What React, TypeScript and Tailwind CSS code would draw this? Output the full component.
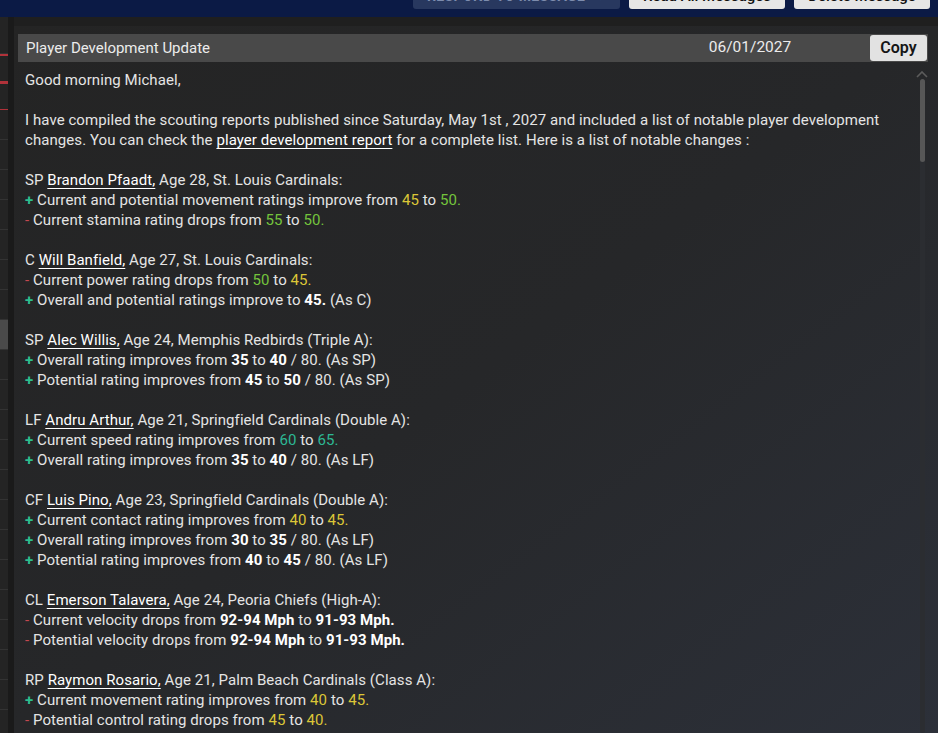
import React from 'react';

type Seg = { t: string; c?: 'y' | 'g' | 't' | 'b' };

interface Change {
  sign: '+' | '-';
  parts: Seg[];
}

interface Player {
  pos: string;
  name: string;
  rest: string;
  changes: Change[];
}

const players: Player[] = [
  {
    pos: 'SP', name: 'Brandon Pfaadt,', rest: ' Age 28, St. Louis Cardinals:',
    changes: [
      { sign: '+', parts: [{ t: 'Current and potential movement ratings improve from ' }, { t: '45', c: 'y' }, { t: ' to ' }, { t: '50.', c: 'g' }] },
      { sign: '-', parts: [{ t: 'Current stamina rating drops from ' }, { t: '55', c: 'g' }, { t: ' to ' }, { t: '50.', c: 'g' }] },
    ],
  },
  {
    pos: 'C', name: 'Will Banfield,', rest: ' Age 27, St. Louis Cardinals:',
    changes: [
      { sign: '-', parts: [{ t: 'Current power rating drops from ' }, { t: '50', c: 'g' }, { t: ' to ' }, { t: '45.', c: 'y' }] },
      { sign: '+', parts: [{ t: 'Overall and potential ratings improve to ' }, { t: '45.', c: 'b' }, { t: ' (As C)' }] },
    ],
  },
  {
    pos: 'SP', name: 'Alec Willis,', rest: ' Age 24, Memphis Redbirds (Triple A):',
    changes: [
      { sign: '+', parts: [{ t: 'Overall rating improves from ' }, { t: '35', c: 'b' }, { t: ' to ' }, { t: '40', c: 'b' }, { t: ' / 80. (As SP)' }] },
      { sign: '+', parts: [{ t: 'Potential rating improves from ' }, { t: '45', c: 'b' }, { t: ' to ' }, { t: '50', c: 'b' }, { t: ' / 80. (As SP)' }] },
    ],
  },
  {
    pos: 'LF', name: 'Andru Arthur,', rest: ' Age 21, Springfield Cardinals (Double A):',
    changes: [
      { sign: '+', parts: [{ t: 'Current speed rating improves from ' }, { t: '60', c: 't' }, { t: ' to ' }, { t: '65.', c: 't' }] },
      { sign: '+', parts: [{ t: 'Overall rating improves from ' }, { t: '35', c: 'b' }, { t: ' to ' }, { t: '40', c: 'b' }, { t: ' / 80. (As LF)' }] },
    ],
  },
  {
    pos: 'CF', name: 'Luis Pino,', rest: ' Age 23, Springfield Cardinals (Double A):',
    changes: [
      { sign: '+', parts: [{ t: 'Current contact rating improves from ' }, { t: '40', c: 'y' }, { t: ' to ' }, { t: '45.', c: 'y' }] },
      { sign: '+', parts: [{ t: 'Overall rating improves from ' }, { t: '30', c: 'b' }, { t: ' to ' }, { t: '35', c: 'b' }, { t: ' / 80. (As LF)' }] },
      { sign: '+', parts: [{ t: 'Potential rating improves from ' }, { t: '40', c: 'b' }, { t: ' to ' }, { t: '45', c: 'b' }, { t: ' / 80. (As LF)' }] },
    ],
  },
  {
    pos: 'CL', name: 'Emerson Talavera,', rest: ' Age 24, Peoria Chiefs (High-A):',
    changes: [
      { sign: '-', parts: [{ t: 'Current velocity drops from ' }, { t: '92-94 Mph', c: 'b' }, { t: ' to ' }, { t: '91-93 Mph.', c: 'b' }] },
      { sign: '-', parts: [{ t: 'Potential velocity drops from ' }, { t: '92-94 Mph', c: 'b' }, { t: ' to ' }, { t: '91-93 Mph.', c: 'b' }] },
    ],
  },
  {
    pos: 'RP', name: 'Raymon Rosario,', rest: ' Age 21, Palm Beach Cardinals (Class A):',
    changes: [
      { sign: '+', parts: [{ t: 'Current movement rating improves from ' }, { t: '40', c: 'y' }, { t: ' to ' }, { t: '45.', c: 'y' }] },
      { sign: '-', parts: [{ t: 'Potential control rating drops from ' }, { t: '45', c: 'y' }, { t: ' to ' }, { t: '40.', c: 'y' }] },
    ],
  },
];

const segClass = (c?: Seg['c']) => {
  if (c === 'y') return 'text-[#dcc637]';
  if (c === 'g') return 'text-[#74c43c]';
  if (c === 't') return 'text-[#2db894]';
  if (c === 'b') return 'font-bold text-white';
  return '';
};

// left list strip, mostly hidden behind the message panel
const sideRows = [
  'h-[28px]', 'h-[28px] border-t-2 border-[#b0323a]', 'h-[28px] border-t-2 border-[#b0323a]', 'h-[30px]', 'h-[30px]',
  'h-[30px]', 'h-[30px]', 'h-[30px]', 'h-[30px]', 'h-[30px]', 'h-[30px]', 'h-[30px]', 'h-[30px]', 'h-[30px]',
  'h-[30px]', 'h-[30px]', 'h-[30px]', 'h-[30px]', 'h-[30px]', 'h-[30px]', 'h-[30px]', 'h-[30px]', 'h-[30px]', 'h-[30px]',
];

const App: React.FC = () => {
  return (
    <div className="w-[938px] h-[733px] overflow-hidden bg-[#1e1e1e] flex flex-col text-[15px] text-[#e4e4e4]" style={{ fontFamily: 'Roboto, "Noto Sans", sans-serif' }}>
      {/* top bar, buttons cut off by the window edge */}
      <div className="h-[17px] shrink-0 bg-[#0b1a45] overflow-hidden flex items-end justify-end gap-[9px] pr-[8px] pb-[8px]">
        <div className="w-[207px] h-[26px] shrink-0 rounded-[3px] bg-[#28385f] text-[#7d8cad] text-[14px] font-bold tracking-wide flex items-center justify-between px-[14px]">
          <span>RESPOND TO MESSAGE</span>
          <span className="text-[10px]">▼</span>
        </div>
        <div className="w-[156px] h-[26px] shrink-0 rounded-[3px] bg-[#e6e6e6] text-[#111] text-[15px] font-medium flex items-center justify-center">Read All Messages</div>
        <div className="w-[136px] h-[26px] shrink-0 rounded-[3px] bg-[#e6e6e6] text-[#111] text-[15px] font-medium flex items-center justify-center">Delete Message</div>
      </div>

      <div className="flex flex-1 min-h-0">
        <div className="w-[8px] shrink-0 bg-[#242424] flex flex-col pt-[9px]">
          {sideRows.map((cls, i) => (
            <div key={i} className={`${cls} shrink-0 border-b border-[#333333] ${i === 10 ? 'bg-[#4a4a4a]' : ''}`} />
          ))}
        </div>
        <div className="w-[6px] shrink-0 bg-[#1a1a1a]" />

        <div className="flex-1 min-w-0 flex flex-col pt-[9px] bg-[#1f1f1f]">
          <div className="flex-1 min-h-0 flex flex-col pt-[8px] pl-[4px] pr-[10px] bg-gradient-to-br from-[#242424] via-[#262729] to-[#2c3039]">
            <div className="h-[28px] shrink-0 bg-[#494949] flex items-center pl-[8px] pr-[1px] text-[15px] text-[#ececec]">
              <span className="flex-1">Player Development Update</span>
              <span className="w-[90px] text-center mr-[75px] text-[15.5px]">06/01/2027</span>
              <button className="w-[57px] h-[26px] rounded-[3px] bg-[#e2e2e2] text-[#151515] text-[16px] font-semibold">Copy</button>
            </div>

            <div className="flex flex-1 min-h-0">
              <div className="flex-1 min-w-0 pl-[7px] pt-[8px] leading-[20px] whitespace-nowrap tracking-[0.07px]">
                <div>Good morning Michael,</div>
                <div className="h-[20px]" />
                <div>I have compiled the scouting reports published since Saturday, May 1st , 2027 and included a list of notable player development</div>
                <div>
                  changes. You can check the <span className="underline underline-offset-[3px] text-white">player development report</span> for a complete list. Here is a list of notable changes :
                </div>
                {players.map((p) => (
                  <div key={p.name}>
                    <div className="h-[20px]" />
                    <div>
                      {p.pos} <span className="underline underline-offset-[3px] text-white">{p.name}</span>
                      {p.rest}
                    </div>
                    {p.changes.map((ch, i) => (
                      <div key={i}>
                        <span className={ch.sign === '+' ? 'text-[#2cbf8e] font-bold' : 'text-[#c44850]'}>{ch.sign}</span>{' '}
                        {ch.parts.map((s, j) => (
                          <span key={j} className={segClass(s.c)}>{s.t}</span>
                        ))}
                      </div>
                    ))}
                  </div>
                ))}
              </div>

              {/* scrollbar */}
              <div className="w-[12px] shrink-0 flex flex-col items-center pt-[9px]">
                <svg width="12" height="7" viewBox="0 0 12 7" className="shrink-0">
                  <path d="M1 6 L6 1 L11 6" stroke="#5c5c5c" strokeWidth="1.6" fill="none" />
                </svg>
                <div className="w-[5px] flex-1 mt-[1px] bg-[#2b2d31] rounded-full flex flex-col">
                  <div className="h-[83px] w-[5px] rounded-full bg-[#575757]" />
                </div>
              </div>
            </div>
          </div>
        </div>
      </div>
    </div>
  );
};

export default App;
